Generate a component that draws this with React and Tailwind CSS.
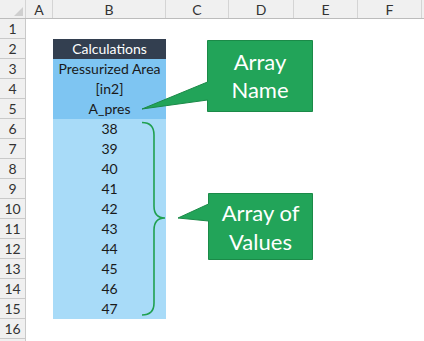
import React from "react"

const cols = [
    { name: "A", w: "w-[27px]" },
    { name: "B", w: "w-[113px]" },
    { name: "C", w: "w-[63px]" },
    { name: "D", w: "w-[65px]" },
    { name: "E", w: "w-[64px]" },
    { name: "F", w: "w-[64px]" },
]

const cellB = {
    2: { text: "Calculations", cls: "bg-[#333f50] text-white" },
    3: { text: "Pressurized Area", cls: "bg-[#7ec5f2] text-[#1a1a1a]" },
    4: { text: "[in2]", cls: "bg-[#7ec5f2] text-[#1a1a1a]" },
    5: { text: "A_pres", cls: "bg-[#7ec5f2] text-[#1a1a1a]" },
}

const values = [38, 39, 40, 41, 42, 43, 44, 45, 46, 47]
values.forEach((v, i) => {
    cellB[i + 6] = { text: String(v), cls: "bg-[#a8dbf8] text-[#1a1a1a]" }
})

// row 17 only peeks in at the bottom edge, so it gets no label
const rows = Array.from({ length: 17 }, (_, i) => i + 1)

const App = () => {
    return (
        <div className="relative w-[424px] h-[341px] overflow-hidden bg-white font-['Lato','Open_Sans',sans-serif]">
            {/* column headers */}
            <div className="flex h-[19px] bg-[#f0f0f0] border-b border-[#bcbcbc]">
                <div className="relative w-[26px] border-r border-[#d4d4d4]">
                    <div className="absolute right-[2px] bottom-[2px] w-0 h-0 border-l-[9px] border-l-transparent border-b-[9px] border-b-[#cfcfcf]" />
                </div>
                {cols.map((c) => (
                    <div
                        key={c.name}
                        className={`${c.w} flex items-center justify-center border-r border-[#d4d4d4] text-[14px] text-[#333]`}
                    >
                        {c.name}
                    </div>
                ))}
                <div className="flex-1" />
            </div>

            {/* rows */}
            {rows.map((r) => {
                const b = cellB[r]
                return (
                    <div key={r} className="flex h-[20px]">
                        <div className="w-[26px] flex items-center justify-center bg-[#f0f0f0] border-r border-b border-[#c9c9c9] text-[14px] text-[#333]">
                            {r < 17 ? r : ""}
                        </div>
                        <div className="w-[27px]" />
                        <div
                            className={`w-[113px] flex items-center justify-center text-[14px] leading-none ${b ? b.cls : ""}`}
                        >
                            {b ? b.text : ""}
                        </div>
                        <div className="flex-1" />
                    </div>
                )
            })}

            {/* callouts and brace drawn over the sheet */}
            <svg className="absolute left-0 top-0 pointer-events-none" width="424" height="341" viewBox="0 0 424 341">
                <defs>
                    <linearGradient id="fade" x1="0" x2="1" y1="0" y2="0">
                        <stop offset="0" stopColor="#20a050" />
                        <stop offset="1" stopColor="#ffffff" stopOpacity="0" />
                    </linearGradient>
                </defs>
                <path
                    d="M207.5,40.5 H312.5 V111.5 H207.5 V100 L142,109 L207.5,82 Z"
                    fill="#22a459"
                    stroke="#1b8a48"
                    strokeWidth="1"
                />
                <path
                    d="M208.5,193.5 H312.5 V259.5 H208.5 V221 L178,218 L208.5,204 Z"
                    fill="#22a459"
                    stroke="#1b8a48"
                    strokeWidth="1"
                />
                <path
                    d="M142,122.5 Q154,122.5 154,135 V206 Q154,218 165,218 Q154,218 154,230 V303 Q154,315 142,315"
                    fill="none"
                    stroke="#20a050"
                    strokeWidth="1.6"
                />
                <line x1="164" y1="218" x2="174" y2="218" stroke="url(#fade)" strokeWidth="1.4" />
            </svg>

            <div className="absolute left-[208px] top-[41px] w-[104px] h-[70px] flex flex-col items-center justify-center text-white text-[22px] leading-[28px]">
                <span>Array</span>
                <span>Name</span>
            </div>
            <div className="absolute left-[209px] top-[194px] w-[103px] h-[65px] flex flex-col items-center justify-center text-white text-[22px] leading-[29px]">
                <span>Array of</span>
                <span>Values</span>
            </div>
        </div>
    )
}

export default App
